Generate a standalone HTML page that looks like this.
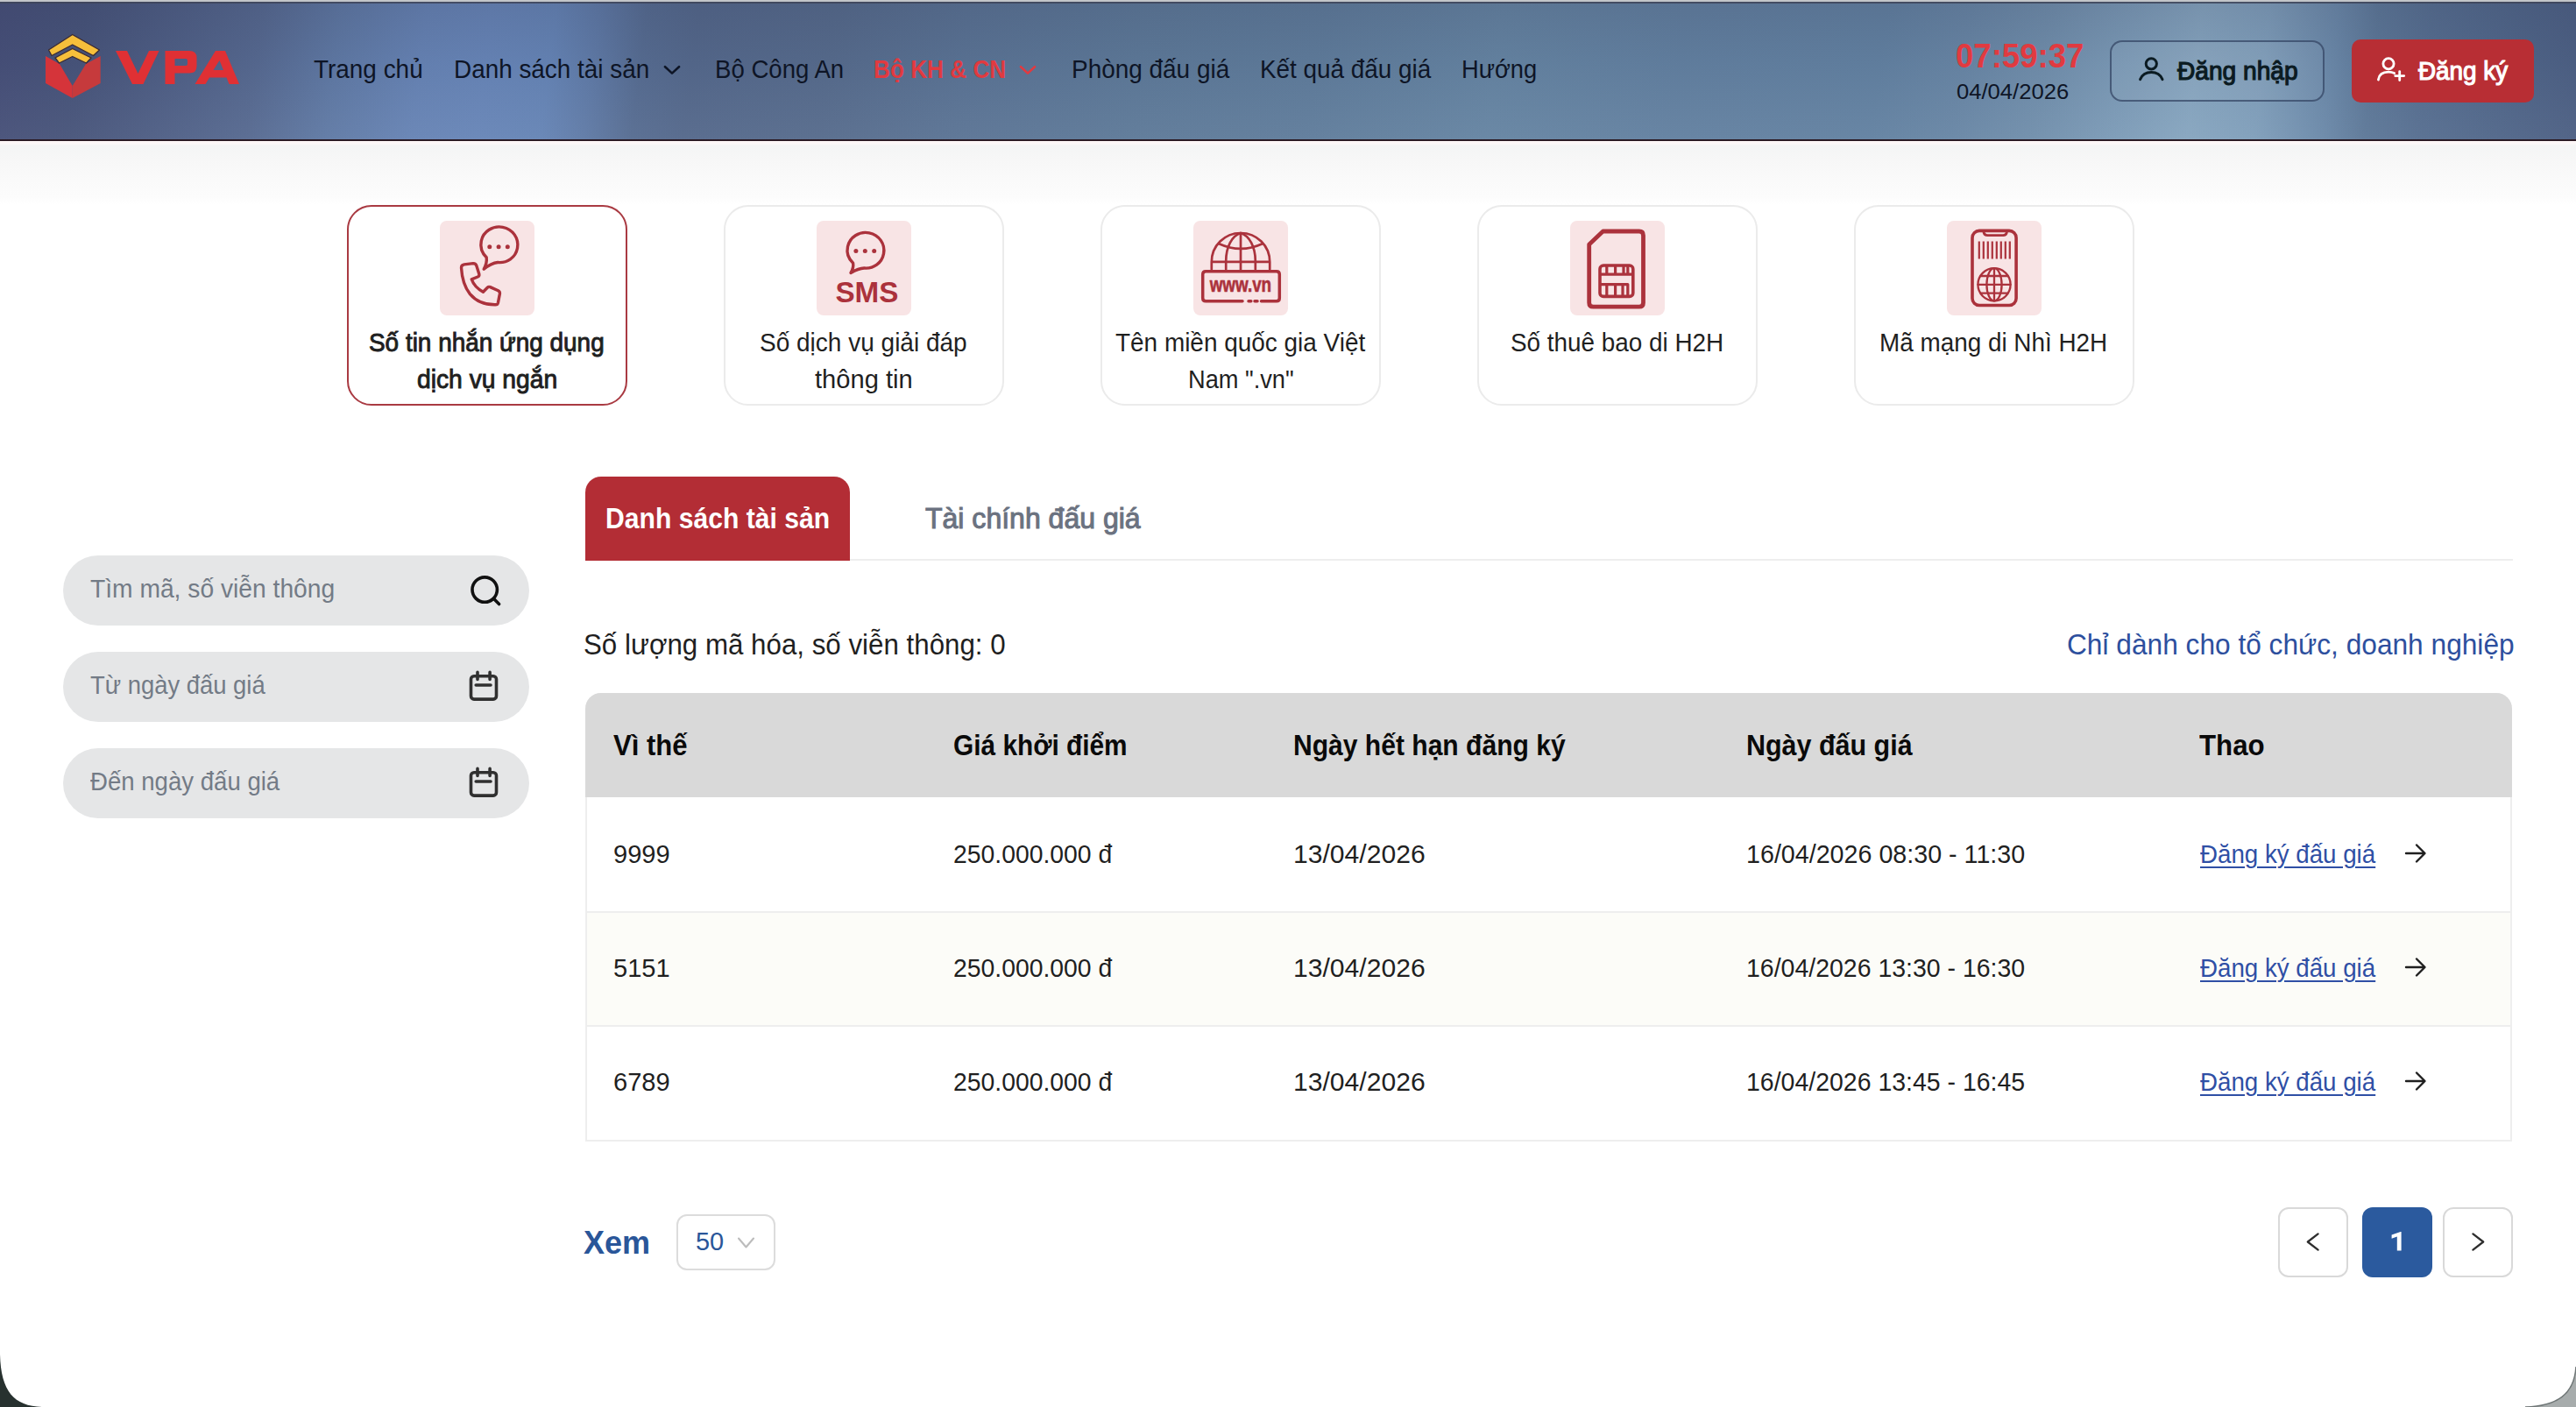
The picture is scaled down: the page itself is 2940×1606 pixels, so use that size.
<!DOCTYPE html>
<html lang="vi">
<head>
<meta charset="utf-8">
<title>VPA - Đấu giá</title>
<style>
html,body{margin:0;padding:0;}
body{width:2940px;height:1606px;overflow:hidden;background:#fff;position:relative;font-family:"Liberation Sans",sans-serif;}
.abs{position:absolute;}
.t{position:absolute;white-space:nowrap;line-height:1;transform-origin:0 0;display:block;}
#hdr{left:0;top:0;width:2940px;height:160px;overflow:hidden;
 background:
  linear-gradient(180deg, rgba(40,44,74,.16) 0%, rgba(40,44,74,.05) 45%, rgba(255,255,255,.04) 100%),
  linear-gradient(97deg,#464f78 0%,#47547a 3.4%,#566990 10.2%,#5f79a4 13.2%,#6683b4 16.5%,#6785b7 19%,#6584b5 21.5%,#5f7aa6 23.2%,#566c91 25%,#54688b 27%,#566b8c 32.3%,#5a7394 37.4%,#5d7998 44.2%,#5f7c9b 51%,#6584a2 58%,#6280a0 65%,#6281a1 72.8%,#6886a5 76%,#708eab 79%,#7c9bb7 82.3%,#86a5bf 85%,#7f9eba 87.6%,#6b89a9 90.2%,#5d7898 91.8%,#566e90 93.9%,#506689 97%,#4c5f83 100%);}
#hdr-top1{left:0;top:0;width:2940px;height:2px;background:#c2c5c9;}
#hdr-top2{left:0;top:2px;width:2940px;height:2px;background:#3f4559;opacity:.85;}
#hdr-bot{left:0;top:159px;width:2940px;height:2px;background:#2a1a23;}
#shadow{left:0;top:161px;width:2940px;height:72px;background:linear-gradient(180deg,#fdf6f6 0,#fdf8f8 3px,#f4f5f5 5px,#f7f7f7 30%,#fafafa 62%,#fcfcfc 90%,#ffffff 100%);}
.card{top:234px;width:316px;height:225px;border:2px solid #ebebeb;border-radius:28px;background:#fff;}
.card.on{border-color:#a93a42;}
.ibox{top:252px;width:108px;height:108px;border-radius:8px;background:#f8e4e5;}
.inp{left:72px;width:532px;height:80px;border-radius:40px;background:#e5e6e7;}
#tab1{left:668px;top:544px;width:302px;height:96px;border-radius:18px 18px 0 0;background:#b32d35;}
#tabline{left:668px;top:638px;width:2200px;height:2px;background:#eeeeee;}
#tbl{left:668px;top:791px;width:2199px;height:512px;border-radius:18px 18px 0 0;background:#eeeeee;overflow:hidden;}
#thead{left:0;top:0;width:2199px;height:119px;background:#d9d9d9;}
.row{left:2px;width:2195px;height:128px;background:#fff;}
.btn{border-radius:12px;box-sizing:border-box;}
</style>
</head>
<body>
<!-- HEADER -->
<div class="abs" id="hdr"></div>
<div class="abs" id="hdr-top1"></div>
<div class="abs" id="hdr-top2"></div>
<div class="abs" id="hdr-bot"></div>
<div class="abs" id="shadow"></div>

<!-- logo -->
<svg class="abs" style="left:40px;top:30px" width="250" height="95" viewBox="40 30 250 95">
  <polygon points="52,64 52,95 82.7,112 82.7,98 68,73" fill="#d5343a"/>
  <polygon points="114.7,64 114.7,95 82.7,112 82.7,98 98,73" fill="#c63a3c"/>
  <polygon points="82.7,39.5 113.5,57 106.5,63.5 82.7,51 59,63.5 55.5,57" fill="#f6bf3b" stroke="#3b2a33" stroke-width="1.3" stroke-linejoin="round"/>
  <polygon points="82.7,55.5 104,66 98.5,72 82.7,64.5 67.5,72 63,66" fill="#f6bf3b" stroke="#3b2a33" stroke-width="1.3" stroke-linejoin="round"/>
  <g fill="#e03034">
    <polygon points="132,58 145,58 157.5,84 170,58 181.5,58 163.5,96 151,96"/>
    <path fill-rule="evenodd" d="M188.5 58 H216 Q224.5 58 224.5 66 V75.5 Q224.5 83.5 216 83.5 H199.5 V96 H188.5 Z M199.5 67 V75 H212 Q214 75 214 73 V69 Q214 67 212 67 Z"/>
    <path fill-rule="evenodd" d="M222.5 96 L246 58 H257 L273 96 H261.5 L258.5 88.5 H239 L234.5 96 Z M243.5 80 H255 L250.5 69 Z"/>
  </g>
</svg>

<!-- nav chevrons -->
<svg class="abs" style="left:754px;top:70px" width="26" height="20" viewBox="0 0 26 20"><path d="M5 6.2 L13 13.6 L21 6.2" fill="none" stroke="#0e1526" stroke-width="2.6" stroke-linecap="round" stroke-linejoin="round"/></svg>
<svg class="abs" style="left:1160px;top:70px" width="26" height="20" viewBox="0 0 26 20"><path d="M5 6.2 L13 13.6 L21 6.2" fill="none" stroke="#e13a40" stroke-width="2.6" stroke-linecap="round" stroke-linejoin="round"/></svg>

<!-- login button -->
<div class="abs" style="left:2408px;top:46px;width:245px;height:70px;box-sizing:border-box;border:2px solid rgba(52,70,100,.75);border-radius:14px;background:rgba(255,255,255,.04);"></div>
<svg class="abs" style="left:2439px;top:63px" width="32" height="32" viewBox="0 0 32 32" fill="none" stroke="#0b1b22" stroke-width="3" stroke-linecap="round"><circle cx="16.3" cy="9.8" r="6.1"/><path d="M3.6 27.6 C6 22 10.8 19.6 16.3 19.6 C21.8 19.6 26.6 22 29 27.6"/></svg>
<!-- register button -->
<div class="abs" style="left:2684px;top:45px;width:208px;height:72px;border-radius:10px;background:#b82e34;"></div>
<svg class="abs" style="left:2711px;top:63px" width="36" height="32" viewBox="0 0 36 32" fill="none" stroke="#ffffff" stroke-width="2.8" stroke-linecap="round"><circle cx="15" cy="9.8" r="6.1"/><path d="M3.4 28 C4.2 22 9 19.2 15 19.2 C17.6 19.2 19.8 19.7 21.6 20.6"/><path d="M27.7 18.6 V28.6 M22.7 23.6 H32.7"/></svg>

<!-- CARDS -->
<div class="abs card on" style="left:396px"></div>
<div class="abs card" style="left:826px"></div>
<div class="abs card" style="left:1256px"></div>
<div class="abs card" style="left:1686px"></div>
<div class="abs card" style="left:2116px"></div>
<div class="abs ibox" style="left:502px"></div>
<div class="abs ibox" style="left:932px"></div>
<div class="abs ibox" style="left:1362px"></div>
<div class="abs ibox" style="left:1792px"></div>
<div class="abs ibox" style="left:2222px"></div>

<!-- icon 1: phone + chat bubble -->
<svg class="abs" style="left:502px;top:252px" width="108" height="108" viewBox="0 0 108 108" fill="none" stroke="#ab323c" stroke-width="3.4" stroke-linecap="round" stroke-linejoin="round">
  <path d="M53.2 41.8 C48.3 37 45.8 30.2 47.3 23 C49.5 12 60.5 5.2 71.8 7.3 C83.2 9.5 90.6 20 88.5 31.2 C86.5 42 76.6 48.6 66 47.5 C61 48 56.5 50 50.2 55.2 C52.8 50.5 53.8 46 53.2 41.8 Z"/>
  <g fill="#ab323c" stroke="none"><circle cx="56.8" cy="29.8" r="2.5"/><circle cx="67.1" cy="29.8" r="2.5"/><circle cx="77.3" cy="29.8" r="2.5"/></g>
  <path d="M27.8 49.9 L38 48.6 Q41 48.5 41.9 51.4 L44.8 60.8 Q45.3 63 43.2 64 L36.2 66.8 Q39.5 76 49.4 81.2 L54.3 76.2 Q55.6 74.9 57.4 75.6 L66.6 79.8 Q68.8 81 68.4 83.4 L66.4 93.6 Q65.9 95.8 63.6 95.8 Q45 96.2 34.4 83.6 Q25.6 72.5 24.5 53.6 Q24.4 50.6 27.8 49.9 Z"/>
</svg>
<!-- icon 2: SMS -->
<svg class="abs" style="left:932px;top:252px" width="108" height="108" viewBox="0 0 108 108" fill="none" stroke="#ab323c" stroke-width="3.4" stroke-linecap="round" stroke-linejoin="round">
  <path d="M41.6 48.2 C36.6 43.5 34 36.5 35.5 29.5 C37.8 18.5 48.8 11.6 60 13.8 C71.3 16 78.6 26.6 76.5 37.6 C74.5 48.2 65 55 54.3 54 C49.5 54.3 45 56 39 59.4 C41.3 55.6 42.3 52 41.6 48.2 Z"/>
  <g fill="#ab323c" stroke="none"><circle cx="44.9" cy="34.5" r="2.5"/><circle cx="55.3" cy="34.5" r="2.5"/><circle cx="65.7" cy="34.5" r="2.5"/></g>
  <text x="57.4" y="92.8" text-anchor="middle" textLength="72" lengthAdjust="spacingAndGlyphs" font-family="Liberation Sans, sans-serif" font-weight="700" font-size="33.5" fill="#ab323c" stroke="none">SMS</text>
</svg>
<!-- icon 3: globe + www.vn -->
<svg class="abs" style="left:1362px;top:252px" width="108" height="108" viewBox="0 0 108 108" fill="none" stroke="#ab323c" stroke-width="2.7" stroke-linecap="round" stroke-linejoin="round">
  <path d="M20.8 55.5 V47 C20.8 28.5 35.6 14 54 14 C72.4 14 87.2 28.5 87.2 47 V55.5"/>
  <path d="M54 14 V55.5"/>
  <path d="M37.2 55.5 V46 C37.2 30 44 17 54 14 C64 17 70.8 30 70.8 46 V55.5"/>
  <path d="M29.3 26.2 Q54 37.5 78.7 26.2 M22 46.9 H86"/>
  <path d="M56 91.8 H14.2 Q10.7 91.8 10.7 88.3 V61.3 Q10.7 57.8 14.2 57.8 H94.8 Q98.3 57.8 98.3 61.3 V88.3 Q98.3 91.8 94.8 91.8 H77.5" stroke-width="3.5"/>
  <path d="M63 91.8 H65.8 M70 91.8 H73" stroke-width="3.5"/>
  <text x="53.9" y="81" text-anchor="middle" textLength="70.5" lengthAdjust="spacingAndGlyphs" font-family="Liberation Sans, sans-serif" font-weight="700" font-size="23" fill="#ab323c" stroke="#ab323c" stroke-width="0.6">www.vn</text>
</svg>
<!-- icon 4: SIM -->
<svg class="abs" style="left:1792px;top:252px" width="108" height="108" viewBox="0 0 108 108" fill="none" stroke="#ab323c" stroke-width="4.8" stroke-linecap="round" stroke-linejoin="round">
  <path d="M37.5 12 H78.8 Q83.5 12 83.5 16.7 V93.4 Q83.5 98.1 78.8 98.1 H26.4 Q21.7 98.1 21.7 93.4 V27 Z"/>
  <rect x="34" y="51" width="37.8" height="35.4" rx="4" stroke-width="3.6"/>
  <path d="M34 61.2 H71.8 M34 72.6 H65.8 V86.4 M41.8 51 V61.2 M51.6 51 V61.2 M61 51 V61.2 M65.8 51 V61.2 M41.8 72.6 V86.4 M51.6 72.6 V86.4 M60 72.6 V86.4" stroke-width="3.2" stroke-linecap="butt"/>
</svg>
<!-- icon 5: phone barcode globe -->
<svg class="abs" style="left:2222px;top:252px" width="108" height="108" viewBox="0 0 108 108" fill="none" stroke="#ab323c" stroke-width="3.6" stroke-linecap="round" stroke-linejoin="round">
  <rect x="29" y="11.4" width="50.1" height="85.1" rx="8"/>
  <path d="M41.8 12 Q42.3 16.6 46.5 16.6 H64 Q68.1 16.6 68.6 12" stroke-width="2.8"/>
  <path d="M36.8 23.4 V43.6 M41.8 23.4 V43.6 M46.8 23.4 V43.6 M51.8 23.4 V43.6 M56.8 23.4 V43.6 M61.8 23.4 V43.6 M66.8 23.4 V43.6 M71.8 23.4 V43.6" stroke-width="2.2" stroke-linecap="butt"/>
  <g stroke-width="2.3">
    <circle cx="54" cy="72.8" r="18.6"/>
    <path d="M54 54.2 V91.4 M35.4 72.8 H72.6"/>
    <ellipse cx="54" cy="72.8" rx="8.6" ry="18.6"/>
    <path d="M38.6 63 H69.4 M38.6 82.6 H69.4"/>
  </g>
</svg>

<!-- FILTER INPUTS -->
<div class="abs inp" style="top:634px"></div>
<div class="abs inp" style="top:744px"></div>
<div class="abs inp" style="top:854px"></div>
<svg class="abs" style="left:532px;top:654px" width="42" height="42" viewBox="0 0 42 42" fill="none" stroke="#111" stroke-width="3.6" stroke-linecap="round"><circle cx="21.2" cy="19.1" r="14.2"/><path d="M31.6 29.6 L37.6 35.6"/></svg>
<svg class="abs" style="left:531px;top:764px" width="42" height="40" viewBox="0 0 42 40" fill="none" stroke="#303030" stroke-width="3.6" stroke-linecap="round" stroke-linejoin="round"><rect x="6.5" y="7.7" width="29" height="26.4" rx="3.5"/><path d="M14 3.4 V11.4 M28.1 3.4 V11.4 M12.2 18 H29"/></svg>
<svg class="abs" style="left:531px;top:874px" width="42" height="40" viewBox="0 0 42 40" fill="none" stroke="#303030" stroke-width="3.6" stroke-linecap="round" stroke-linejoin="round"><rect x="6.5" y="7.7" width="29" height="26.4" rx="3.5"/><path d="M14 3.4 V11.4 M28.1 3.4 V11.4 M12.2 18 H29"/></svg>

<!-- TABS -->
<div class="abs" id="tabline"></div>
<div class="abs" id="tab1"></div>

<!-- TABLE -->
<div class="abs" id="tbl">
  <div class="abs" id="thead"></div>
  <div class="abs row" style="top:119px;height:130px"></div>
  <div class="abs row" style="top:251px;background:#fcfcf8"></div>
  <div class="abs row" style="top:381px;height:129px"></div>
</div>
<svg class="abs" style="left:2742px;top:960px" width="30" height="28" viewBox="0 0 30 28" fill="none" stroke="#1f1f1f" stroke-width="2.4" stroke-linecap="round" stroke-linejoin="round"><path d="M4 14 H25 M16 4.5 L25.5 14 L16 23.5"/></svg>
<svg class="abs" style="left:2742px;top:1090px" width="30" height="28" viewBox="0 0 30 28" fill="none" stroke="#1f1f1f" stroke-width="2.4" stroke-linecap="round" stroke-linejoin="round"><path d="M4 14 H25 M16 4.5 L25.5 14 L16 23.5"/></svg>
<svg class="abs" style="left:2742px;top:1220px" width="30" height="28" viewBox="0 0 30 28" fill="none" stroke="#1f1f1f" stroke-width="2.4" stroke-linecap="round" stroke-linejoin="round"><path d="M4 14 H25 M16 4.5 L25.5 14 L16 23.5"/></svg>

<!-- PAGINATION -->
<div class="abs btn" style="left:772px;top:1386px;width:113px;height:64px;border:2px solid #dcdcdc;border-radius:12px;background:#fff;"></div>
<svg class="abs" style="left:838px;top:1408px" width="28" height="22" viewBox="0 0 28 22" fill="none" stroke="#bcbcbc" stroke-width="2.1" stroke-linecap="round" stroke-linejoin="round"><path d="M5 5.5 L13.5 15.5 L22 5.5"/></svg>
<div class="abs btn" style="left:2600px;top:1378px;width:80px;height:80px;border:2px solid #d9d9d9;background:#fff;"></div>
<div class="abs btn" style="left:2696px;top:1378px;width:80px;height:80px;background:#2b5a9e;"></div>
<div class="abs btn" style="left:2788px;top:1378px;width:80px;height:80px;border:2px solid #d9d9d9;background:#fff;"></div>
<svg class="abs" style="left:2628px;top:1403px" width="24" height="30" viewBox="0 0 24 30" fill="none" stroke="#2e2e2e" stroke-width="2.3" stroke-linecap="round" stroke-linejoin="round"><path d="M17.6 5.4 L5.8 14.5 L17.6 23.6"/></svg>
<svg class="abs" style="left:2816px;top:1403px" width="24" height="30" viewBox="0 0 24 30" fill="none" stroke="#2e2e2e" stroke-width="2.3" stroke-linecap="round" stroke-linejoin="round"><path d="M6.4 5.4 L18.2 14.5 L6.4 23.6"/></svg>

<svg class="abs" style="left:2720px;top:1400px" width="30" height="34" viewBox="2720 1400 30 34"><path d="M2740.6 1406 V1427.4 H2735.8 V1411.6 L2729.6 1413.8 V1409.6 L2739.8 1406 Z" fill="#fff"/></svg>

<!-- window corners -->
<svg class="abs" style="left:0;top:1546px" width="48" height="60" viewBox="0 0 48 60"><path d="M0 0 V60 H48 C16 59 1 42 0 0 Z" fill="#27312f"/></svg>
<svg class="abs" style="left:2882px;top:1560px" width="58" height="46" viewBox="0 0 58 46"><path d="M58 0 V46 H0 C36 45 56 32 58 0 Z" fill="#a7acac"/><path d="M0 46 C36 45 56 32 58 0" fill="none" stroke="#6f7676" stroke-width="1.5"/></svg>

<!-- TEXT -->
<span class="t" style="left:358.41px;top:65.02px;font-size:28.92px;font-weight:400;color:#0e1526;transform:scaleX(0.9659);">Trang chủ</span>
<span class="t" style="left:518.41px;top:65.02px;font-size:28.92px;font-weight:400;color:#0e1526;transform:scaleX(0.9645);">Danh sách tài sản</span>
<span class="t" style="left:815.91px;top:65.02px;font-size:28.92px;font-weight:400;color:#0e1526;transform:scaleX(0.9539);">Bộ Công An</span>
<span class="t" style="left:997.41px;top:65.02px;font-size:28.92px;font-weight:700;color:#e13a40;transform:scaleX(0.9052);">Bộ KH &amp; CN</span>
<span class="t" style="left:1223.41px;top:65.02px;font-size:28.92px;font-weight:400;color:#0e1526;transform:scaleX(0.9664);">Phòng đấu giá</span>
<span class="t" style="left:1438.41px;top:65.02px;font-size:28.92px;font-weight:400;color:#0e1526;transform:scaleX(0.9638);">Kết quả đấu giá</span>
<span class="t" style="left:1668.41px;top:65.02px;font-size:28.92px;font-weight:400;color:#0e1526;transform:scaleX(0.9435);">Hướng</span>
<span class="t" style="left:2231.84px;top:43.77px;font-size:39.25px;font-weight:700;color:#e13a40;transform:scaleX(0.9312);">07:59:37</span>
<span class="t" style="left:2232.64px;top:92.52px;font-size:24.79px;font-weight:400;color:#0e1526;transform:scaleX(1.0339);">04/04/2026</span>
<span class="t" style="left:2485.41px;top:67.02px;font-size:28.92px;font-weight:400;color:#0b1b22;-webkit-text-stroke:1.16px #0b1b22;transform:scaleX(0.9733);">Đăng nhập</span>
<span class="t" style="left:2760.41px;top:67.02px;font-size:28.92px;font-weight:400;color:#ffffff;-webkit-text-stroke:1.16px #ffffff;transform:scaleX(0.9635);">Đăng ký</span>
<span class="t" style="left:421.41px;top:376.52px;font-size:28.92px;font-weight:400;color:#1f1f1f;-webkit-text-stroke:0.93px #1f1f1f;transform:scaleX(0.9660);">Số tin nhắn ứng dụng</span>
<span class="t" style="left:475.91px;top:418.52px;font-size:28.92px;font-weight:400;color:#1f1f1f;-webkit-text-stroke:0.93px #1f1f1f;transform:scaleX(0.9771);">dịch vụ ngắn</span>
<span class="t" style="left:867.41px;top:376.52px;font-size:28.92px;font-weight:400;color:#1f1f1f;transform:scaleX(0.9689);">Số dịch vụ giải đáp</span>
<span class="t" style="left:929.91px;top:418.52px;font-size:28.92px;font-weight:400;color:#1f1f1f;transform:scaleX(1.0070);">thông tin</span>
<span class="t" style="left:1273.41px;top:376.52px;font-size:28.92px;font-weight:400;color:#1f1f1f;transform:scaleX(0.9663);">Tên miền quốc gia Việt</span>
<span class="t" style="left:1355.91px;top:418.52px;font-size:28.92px;font-weight:400;color:#1f1f1f;transform:scaleX(0.9417);">Nam ".vn"</span>
<span class="t" style="left:1723.91px;top:376.52px;font-size:28.92px;font-weight:400;color:#1f1f1f;transform:scaleX(0.9639);">Số thuê bao di H2H</span>
<span class="t" style="left:2145.41px;top:376.52px;font-size:28.92px;font-weight:400;color:#1f1f1f;transform:scaleX(0.9640);">Mã mạng di Nhì H2H</span>
<span class="t" style="left:102.91px;top:658.02px;font-size:28.92px;font-weight:400;color:#737b86;transform:scaleX(0.9762);">Tìm mã, số viễn thông</span>
<span class="t" style="left:102.91px;top:768.02px;font-size:28.92px;font-weight:400;color:#737b86;transform:scaleX(0.9482);">Từ ngày đấu giá</span>
<span class="t" style="left:102.91px;top:878.02px;font-size:28.92px;font-weight:400;color:#737b86;transform:scaleX(0.9540);">Đến ngày đấu giá</span>
<span class="t" style="left:690.68px;top:574.51px;font-size:33.06px;font-weight:700;color:#ffffff;transform:scaleX(0.9115);">Danh sách tài sản</span>
<span class="t" style="left:1056.18px;top:574.51px;font-size:33.06px;font-weight:400;color:#6b7280;-webkit-text-stroke:1.06px #6b7280;transform:scaleX(0.9688);">Tài chính đấu giá</span>
<span class="t" style="left:666.18px;top:718.51px;font-size:33.06px;font-weight:400;color:#1f1f1f;transform:scaleX(0.9470);">Số lượng mã hóa, số viễn thông: 0</span>
<span class="t" style="left:2358.68px;top:718.51px;font-size:33.06px;font-weight:400;color:#2d4f9e;transform:scaleX(0.9582);">Chỉ dành cho tổ chức, doanh nghiệp</span>
<span class="t" style="left:700.18px;top:834.01px;font-size:33.06px;font-weight:700;color:#0a0a0a;transform:scaleX(0.9406);">Vì thế</span>
<span class="t" style="left:1088.18px;top:834.01px;font-size:33.06px;font-weight:700;color:#0a0a0a;transform:scaleX(0.9028);">Giá khởi điểm</span>
<span class="t" style="left:1475.68px;top:834.01px;font-size:33.06px;font-weight:700;color:#0a0a0a;transform:scaleX(0.9095);">Ngày hết hạn đăng ký</span>
<span class="t" style="left:1992.68px;top:834.01px;font-size:33.06px;font-weight:700;color:#0a0a0a;transform:scaleX(0.9221);">Ngày đấu giá</span>
<span class="t" style="left:2510.18px;top:834.01px;font-size:33.06px;font-weight:700;color:#0a0a0a;transform:scaleX(0.9454);">Thao</span>
<span class="t" style="left:700.41px;top:960.52px;font-size:28.92px;font-weight:400;color:#1f1f1f;transform:scaleX(1.0057);">9999</span>
<span class="t" style="left:1088.41px;top:961.02px;font-size:28.92px;font-weight:400;color:#1f1f1f;transform:scaleX(0.9801);">250.000.000 đ</span>
<span class="t" style="left:1475.91px;top:960.52px;font-size:28.92px;font-weight:400;color:#1f1f1f;transform:scaleX(1.0414);">13/04/2026</span>
<span class="t" style="left:1992.91px;top:960.52px;font-size:28.92px;font-weight:400;color:#1f1f1f;transform:scaleX(0.9915);">16/04/2026 08:30 - 11:30</span>
<span class="t" style="left:2511.41px;top:960.52px;font-size:28.92px;font-weight:400;color:#2f4fa5;transform:scaleX(0.9582);text-decoration:underline;text-decoration-thickness:2px;text-underline-offset:4px;">Đăng ký đấu giá</span>
<span class="t" style="left:700.41px;top:1090.52px;font-size:28.92px;font-weight:400;color:#1f1f1f;transform:scaleX(1.0057);">5151</span>
<span class="t" style="left:1088.41px;top:1091.02px;font-size:28.92px;font-weight:400;color:#1f1f1f;transform:scaleX(0.9801);">250.000.000 đ</span>
<span class="t" style="left:1475.91px;top:1090.52px;font-size:28.92px;font-weight:400;color:#1f1f1f;transform:scaleX(1.0414);">13/04/2026</span>
<span class="t" style="left:1992.91px;top:1090.52px;font-size:28.92px;font-weight:400;color:#1f1f1f;transform:scaleX(0.9848);">16/04/2026 13:30 - 16:30</span>
<span class="t" style="left:2511.41px;top:1090.52px;font-size:28.92px;font-weight:400;color:#2f4fa5;transform:scaleX(0.9582);text-decoration:underline;text-decoration-thickness:2px;text-underline-offset:4px;">Đăng ký đấu giá</span>
<span class="t" style="left:700.41px;top:1220.52px;font-size:28.92px;font-weight:400;color:#1f1f1f;transform:scaleX(1.0057);">6789</span>
<span class="t" style="left:1088.41px;top:1221.02px;font-size:28.92px;font-weight:400;color:#1f1f1f;transform:scaleX(0.9801);">250.000.000 đ</span>
<span class="t" style="left:1475.91px;top:1220.52px;font-size:28.92px;font-weight:400;color:#1f1f1f;transform:scaleX(1.0414);">13/04/2026</span>
<span class="t" style="left:1992.91px;top:1220.52px;font-size:28.92px;font-weight:400;color:#1f1f1f;transform:scaleX(0.9848);">16/04/2026 13:45 - 16:45</span>
<span class="t" style="left:2511.41px;top:1220.52px;font-size:28.92px;font-weight:400;color:#2f4fa5;transform:scaleX(0.9582);text-decoration:underline;text-decoration-thickness:2px;text-underline-offset:4px;">Đăng ký đấu giá</span>
<span class="t" style="left:665.95px;top:1399.52px;font-size:37.19px;font-weight:700;color:#2a5699;transform:scaleX(0.9689);">Xem</span>
<span class="t" style="left:794.41px;top:1402.52px;font-size:28.92px;font-weight:400;color:#2a5699;transform:scaleX(1.0007);">50</span>
</body>
</html>
